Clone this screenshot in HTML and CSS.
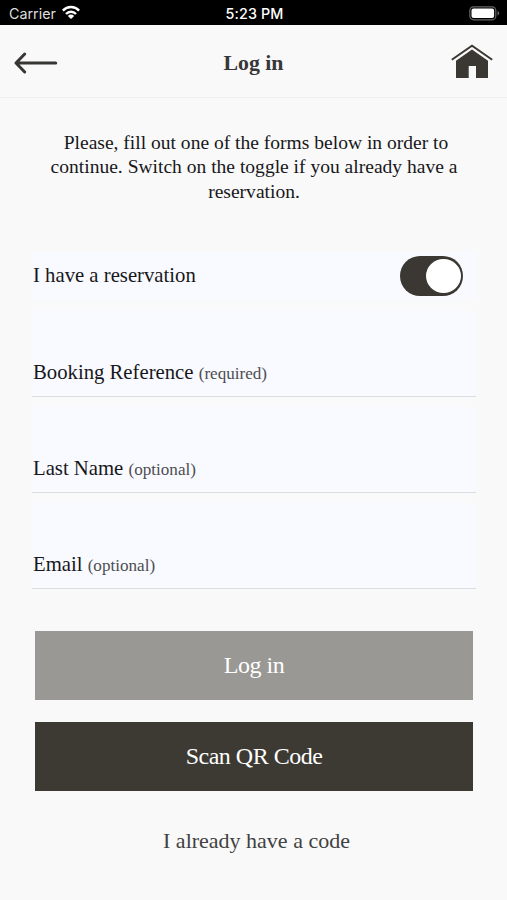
FILE: index.html
```html
<!DOCTYPE html>
<html lang="en">
<head>
<meta charset="utf-8">
<title>Log in</title>
<link rel="stylesheet" href="styles.css">
</head>
<body>
<div class="status">
  <div class="carrier"><span>Carrier</span>
    <svg class="wifi" width="20" height="15" viewBox="0 0 20 15" fill="none" stroke="#fff" stroke-width="2.5"><path d="M1.9 5.6C6.4 .9 13.6 .9 18.1 5.6M5 9C7.8 6.1 12.2 6.1 15 9"/><path d="M10 14 6.8 10.9Q10 8.3 13.2 10.9Z" fill="#fff" stroke="none"/></svg>
  </div>
  <span class="time">5:23 PM</span>
  <svg class="battery" width="31" height="15" viewBox="0 0 31 15"><rect x=".8" y=".8" width="26" height="13" rx="3.8" fill="none" stroke="#666" stroke-width="1.2"/><rect x="2.5" y="2.5" width="22.6" height="9.6" rx="2" fill="#fff"/><path d="M28.5 5Q30.3 5.6 30.3 7.3T28.5 9.6Z" fill="#666"/></svg>
</div>
<header class="header">
  <svg class="back" width="46" height="24" viewBox="0 0 46 24" fill="none" stroke="#373632" stroke-width="3" stroke-linecap="round" stroke-linejoin="round"><path d="M42.7 12H3M11.7 3 3 12l8.7 9"/></svg>
  <h1 class="title">Log in</h1>
  <svg class="home" width="44" height="36" viewBox="0 0 44 36"><path d="M1.8 16.8 22 2.8l20.2 14" fill="none" stroke="#3b3833" stroke-width="2"/><path d="M22 6.5 38 17.8V35H26V23h-7.3v12H6V17.8Z" fill="#3b3833"/></svg>
</header>
<main class="main">
  <p class="intro"><span class="lead">Please, fill out one of the forms below in order to</span><br>continue. Switch on the toggle if you already have a<br>reservation.</p>
  <form class="form">
    <div class="toggle-row"><span>I have a reservation</span><span class="switch"><span class="knob"></span></span></div>
    <div class="field"><label>Booking Reference <small>(required)</small></label></div>
    <div class="field"><label>Last Name <small>(optional)</small></label></div>
    <div class="field"><label>Email <small>(optional)</small></label></div>
  </form>
  <div class="actions">
    <button class="button disabled" type="button">Log in</button>
    <button class="button" type="button">Scan QR Code</button>
    <a class="code-link">I already have a code</a>
  </div>
</main>
</body>
</html>
```
FILE: styles.css
```css
* { box-sizing: border-box; }
body {
  margin: 0;
  height: 900px;
  overflow: hidden;
  background: #f9f9f9;
  color: #17171a;
  font-family: "Liberation Serif", "Times New Roman", serif;
}
.status {
  display: grid;
  grid-template-columns: 1fr auto 1fr;
  align-items: center;
  height: 25px;
  padding: 2px 7px 0 9px;
  background: #000;
  color: #fff;
  font: 14.3px/20px Inter, sans-serif;
}
.carrier { display: flex; align-items: center; gap: 5px; color: #ddd; }
.wifi { margin-top: -2px; }
.time { font-weight: 500; letter-spacing: .15px; }
.battery { justify-self: end; margin-top: -1px; }
.header {
  display: grid;
  grid-template-columns: 1fr auto 1fr;
  align-items: center;
  height: 73px;
  padding: 0 13px;
  border-bottom: 1px solid #efefef;
  color: #373737;
}
.back { margin-top: 3px; }
.title { margin: 3px 0 0; font-size: 21.8px; line-height: 26px; }
.home { justify-self: end; }
.main { padding: 33px 31px 0 32px; }
.intro {
  margin: 0 -10px;
  text-align: center;
  font-size: 19.54px;
  line-height: 24.4px;
}
.lead { padding-left: 4px; }
.form { margin-top: 48px; font-size: 20.72px; }
.toggle-row {
  display: flex;
  align-items: center;
  justify-content: space-between;
  height: 47px;
  padding: 0 13px 0 1px;
  background: #f9faff;
}
.switch {
  display: flex;
  justify-content: flex-end;
  width: 63px;
  height: 40px;
  padding: 3px 2px;
  border-radius: 20px;
  background: #3b3833;
}
.knob { width: 35px; height: 34px; border-radius: 50%; background: #fff; }
.field {
  display: flex;
  align-items: flex-end;
  height: 86px;
  margin-top: 10px;
  padding: 0 1px 12px;
  border-bottom: 1px solid #dcdee2;
  background: #f9faff;
}
.toggle-row + .field { margin-top: 12px; }
.field small { font-size: 17.1px; color: #4d4d50; }
.actions {
  display: flex;
  flex-direction: column;
  align-items: stretch;
  gap: 22px;
  margin: 42px 3px 0;
}
.button {
  height: 69px;
  padding: 0;
  border: 0;
  background: #3d3933;
  color: #fff;
  font-family: inherit;
  font-size: 24px;
  letter-spacing: -.5px;
}
.disabled { background: #999895; }
.code-link {
  margin: 15px 0 0 5px;
  text-align: center;
  color: #414141;
  font-size: 22px;
  line-height: 25px;
}
```
